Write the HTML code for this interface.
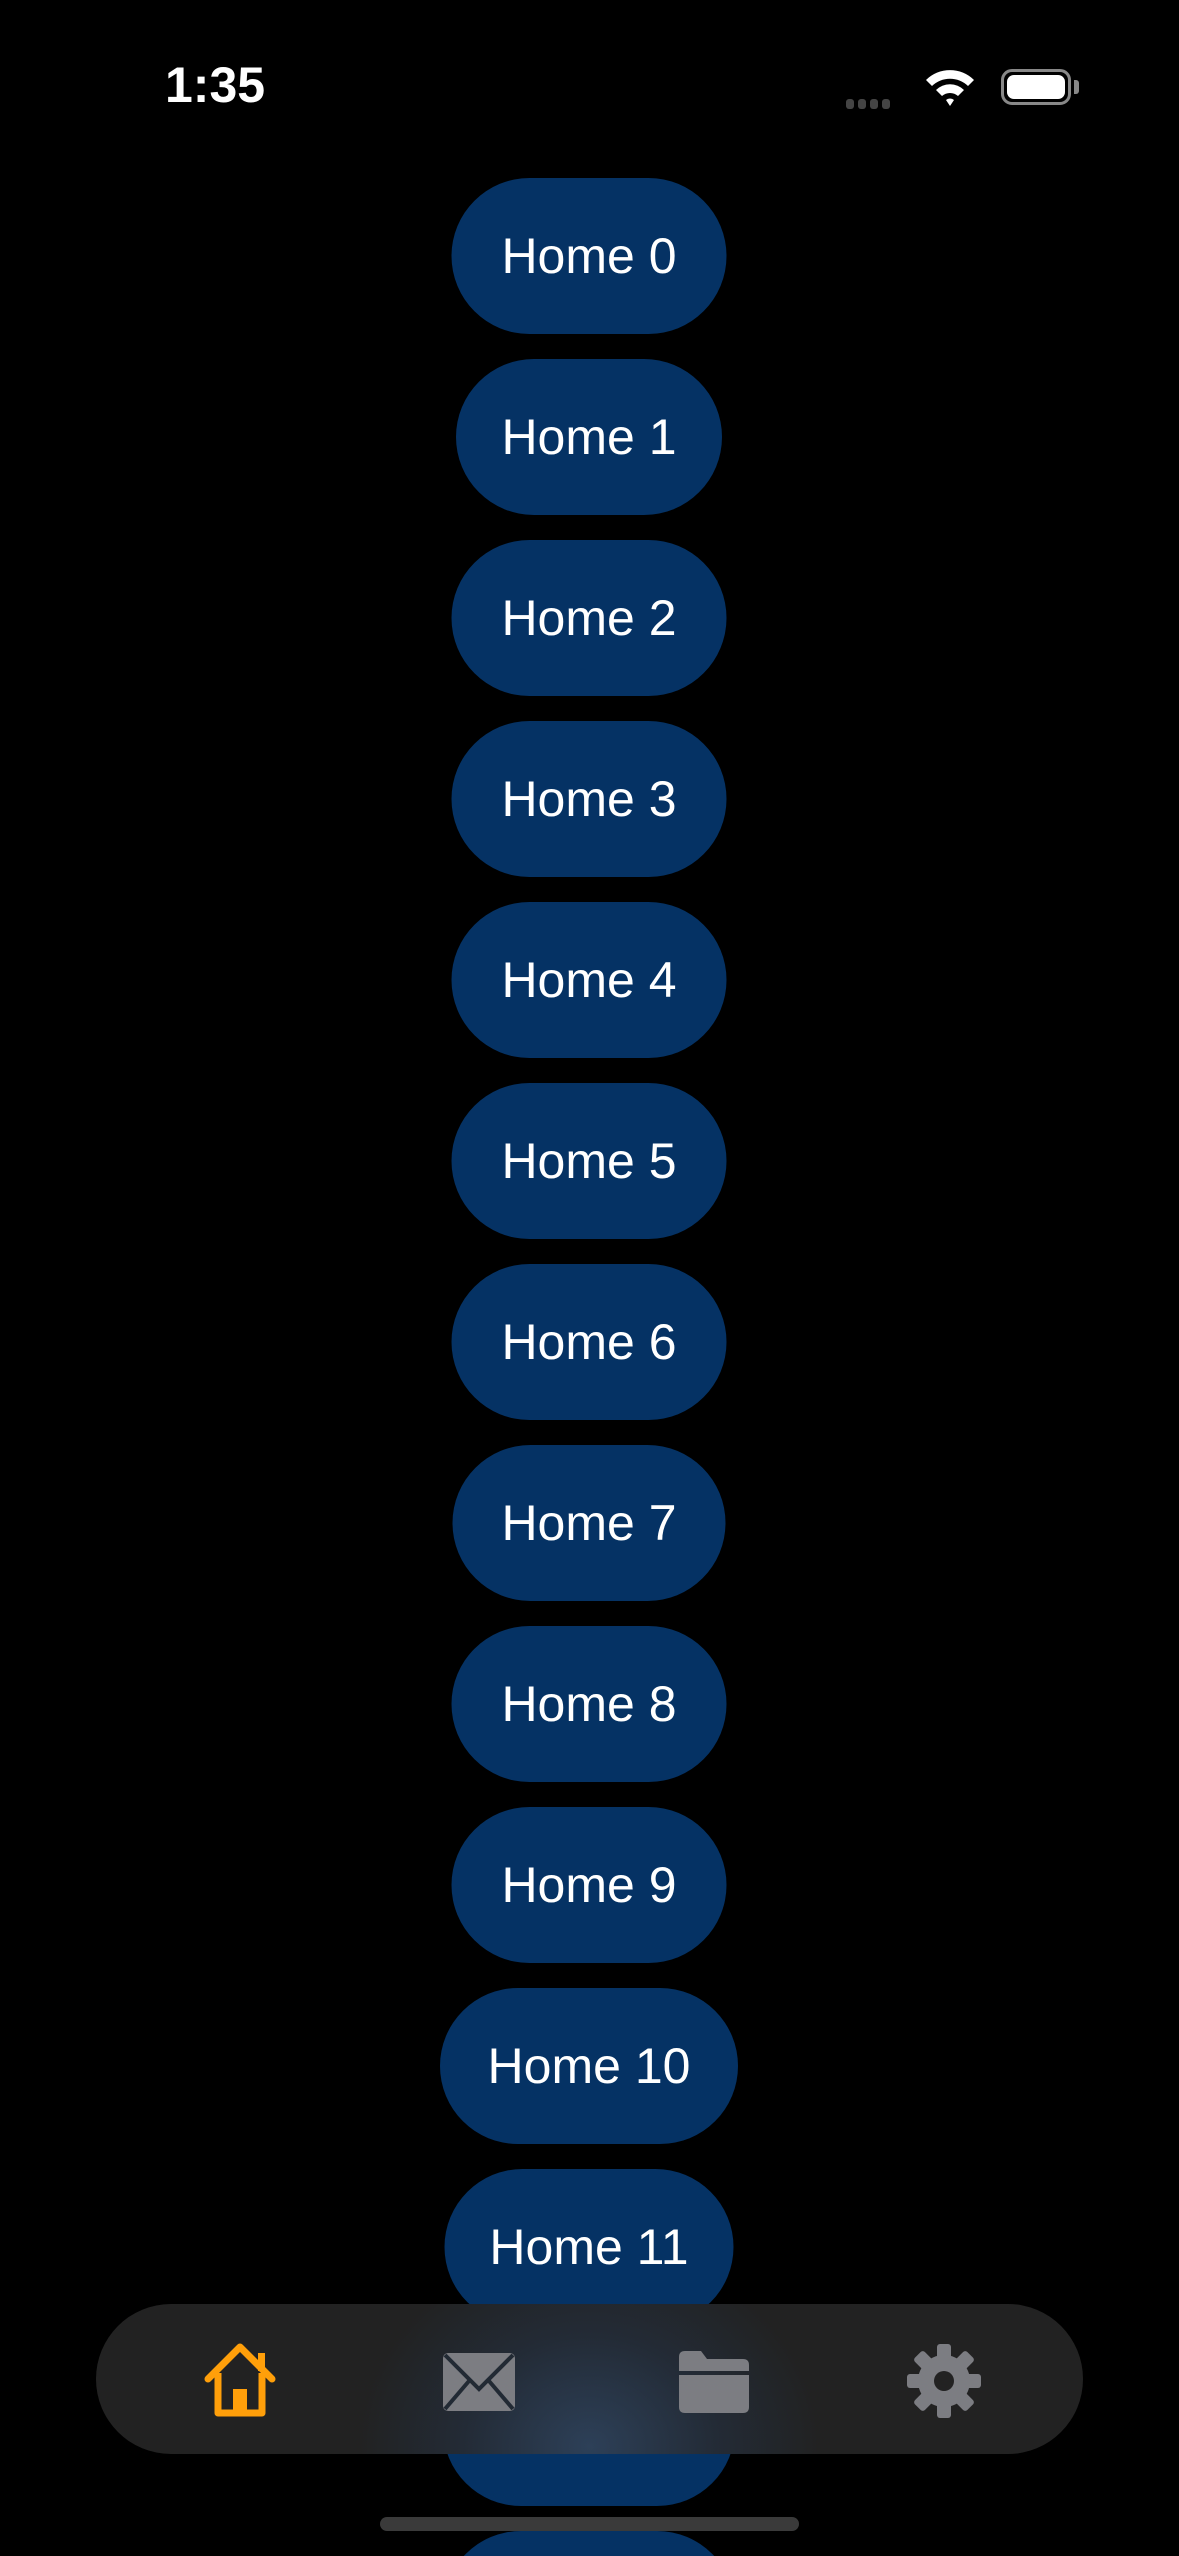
<!DOCTYPE html>
<html><head><style>
html{width:1179px;height:2556px;overflow:hidden;}
html,body{margin:0;padding:0;background:#000;}
body{width:1179px;height:2556px;position:relative;overflow:hidden;font-family:"Liberation Sans",sans-serif;}
#w{position:absolute;left:0;top:0;width:1179px;height:2556px;overflow:hidden;}
.b{position:absolute;height:156px;border-radius:78px;background:#053264;color:#fff;font-size:50px;display:flex;align-items:center;justify-content:center;transform:translateX(-50%);left:589px;}
.tab{position:absolute;left:96px;top:2304px;width:987px;height:150px;border-radius:75px;background:radial-gradient(ellipse 230px 200px at 50% 95%,#2d4058 0%,#232b36 55%,#222 100%);}
.ic{position:absolute;top:2341px;width:80px;height:80px;}
</style></head><body><div id="w">
<div style="position:absolute;left:165px;top:56px;color:#fff;font-weight:bold;font-size:50px;">1:35</div>
<div style="position:absolute;left:846px;top:96px;">
<span style="display:inline-block;width:8px;height:10px;background:#444;border-radius:3px;margin-right:4px"></span><span style="display:inline-block;width:8px;height:10px;background:#444;border-radius:3px;margin-right:4px"></span><span style="display:inline-block;width:8px;height:10px;background:#444;border-radius:3px;margin-right:4px"></span><span style="display:inline-block;width:8px;height:10px;background:#444;border-radius:3px;"></span></div>
<svg style="position:absolute;left:924px;top:66px" width="52" height="42" viewBox="0 0 52 42"><path d="M2 14 A34 34 0 0 1 50 14 L44 20 A26 26 0 0 0 8 20Z M12 24 A20 20 0 0 1 40 24 L34 30 A12 12 0 0 0 18 30Z M22 34 A6 6 0 0 1 30 34 L26 40Z" fill="#fff"/></svg>
<div style="position:absolute;left:1001px;top:69px;width:70px;height:36px;border:3px solid #888;border-radius:11px;box-sizing:border-box;"><div style="position:absolute;left:3px;top:3px;right:3px;bottom:3px;background:#fff;border-radius:7px"></div></div>
<div style="position:absolute;left:1074px;top:80px;width:5px;height:14px;background:#888;border-radius:0 3px 3px 0"></div>

<div class="b" style="top:178px;width:275px">Home 0</div>
<div class="b" style="top:359px;width:266px">Home 1</div>
<div class="b" style="top:540px;width:275px">Home 2</div>
<div class="b" style="top:721px;width:275px">Home 3</div>
<div class="b" style="top:902px;width:275px">Home 4</div>
<div class="b" style="top:1083px;width:275px">Home 5</div>
<div class="b" style="top:1264px;width:275px">Home 6</div>
<div class="b" style="top:1445px;width:273px">Home 7</div>
<div class="b" style="top:1626px;width:275px">Home 8</div>
<div class="b" style="top:1807px;width:275px">Home 9</div>
<div class="b" style="top:1988px;width:298px">Home 10</div>
<div class="b" style="top:2169px;width:289px">Home 11</div>
<div class="b" style="top:2350px;width:292px">Home 12</div>
<div style="position:absolute;left:443px;top:2531px;width:292px;height:25px;overflow:hidden;"><div style="position:absolute;left:0;top:0;width:292px;height:156px;border-radius:78px;background:#053264;color:#fff;font-size:50px;display:flex;align-items:center;justify-content:center;">Home 13</div></div>

<div class="tab"></div>
<svg class="ic" style="left:200px" viewBox="0 0 80 80"><path d="M8 38 L40 6 L72 38" fill="none" stroke="#ff9f0a" stroke-width="7" stroke-linecap="round" stroke-linejoin="round"/><path d="M18 32 V72 H62 V32" fill="none" stroke="#ff9f0a" stroke-width="7" stroke-linejoin="round"/><rect x="33" y="48" width="14" height="24" fill="#ff9f0a"/><rect x="58" y="12" width="7" height="18" fill="#ff9f0a"/></svg>
<svg class="ic" style="left:439px" viewBox="0 0 80 80"><rect x="4" y="12" width="72" height="58" rx="5" fill="#7c7d82"/><path d="M6 14 L40 48 L74 14 M6 68 L30 40 M74 68 L50 40" stroke="#222a34" stroke-width="4" fill="none"/></svg>
<svg class="ic" style="left:673px" viewBox="0 0 80 80"><path d="M6 16 Q6 10 12 10 H28 L34 18 H70 Q76 18 76 24 V30 H6Z" fill="#7c7d82"/><path d="M6 34 H76 V66 Q76 72 70 72 H12 Q6 72 6 66Z" fill="#7c7d82"/></svg>
<svg class="ic" style="left:904px" viewBox="0 0 80 80"><g fill="#7c7d82" transform="translate(40,40)"><circle r="26"/><g id="t"><rect x="-7" y="-37" width="14" height="16" rx="3"/></g><use href="#t" transform="rotate(45)"/><use href="#t" transform="rotate(90)"/><use href="#t" transform="rotate(135)"/><use href="#t" transform="rotate(180)"/><use href="#t" transform="rotate(225)"/><use href="#t" transform="rotate(270)"/><use href="#t" transform="rotate(315)"/></g><circle cx="40" cy="40" r="10" fill="#222"/></svg>
<div style="position:absolute;left:380px;top:2517px;width:419px;height:14px;border-radius:7px;background:#3a3a3a"></div>
</div></body></html>
